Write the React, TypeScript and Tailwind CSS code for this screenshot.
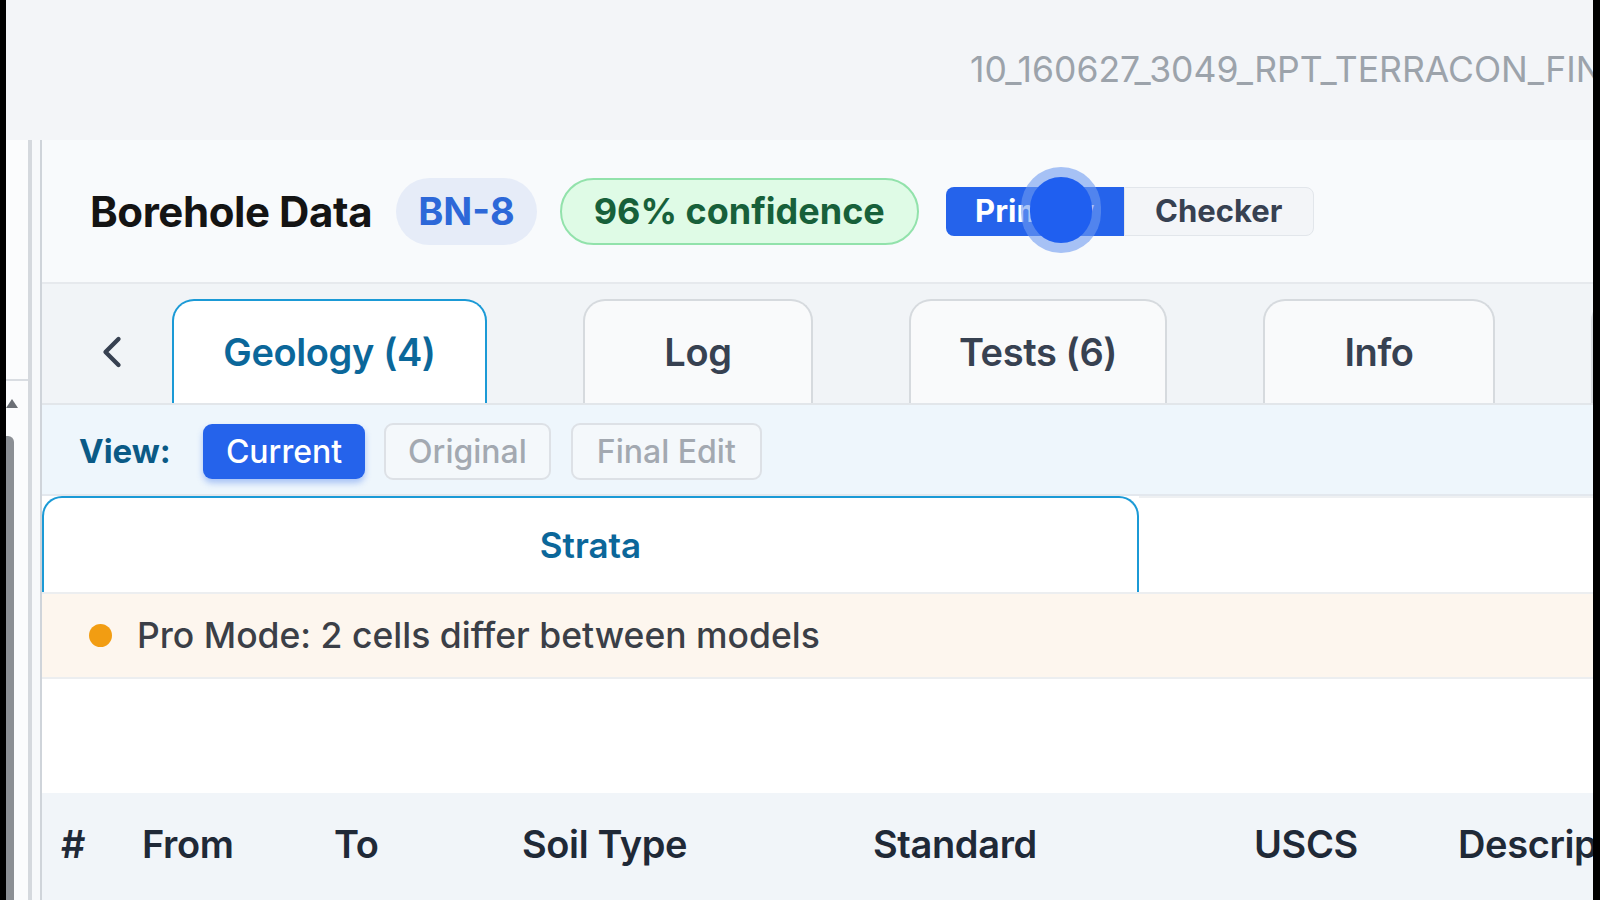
import { ChevronLeft } from "lucide-react"

const tabs = [
  { label: "Geology (4)", width: "w-[315px]", active: true },
  { label: "Log", width: "w-[230px]", active: false },
  { label: "Tests (6)", width: "w-[258px]", active: false },
  { label: "Info", width: "w-[232px]", active: false },
]

const columns = ["#", "From", "To", "Soil Type", "Standard", "USCS", "Description"]

function Header() {
  return (
    <div className="flex h-[144px] shrink-0 items-center border-b-2 border-[#e6e9ed] bg-[#f8fafc] pl-[48px]">
      <h1 className="text-[42px] font-bold tracking-[-0.01em] text-[#141414]">Borehole Data</h1>
      <span className="ml-[24px] flex h-[67px] items-center rounded-full bg-[#e6ecf8] px-[22px] text-[38px] font-bold text-[#2d68d8]">
        BN-8
      </span>
      <span className="ml-[23px] flex h-[67px] w-[359px] items-center justify-center rounded-full border-2 border-[#92e2ab] bg-[#dffbe6] text-[36px] font-bold text-[#17603a]">
        96% confidence
      </span>
      <div className="relative ml-[27px] flex h-[49px]">
        <span className="flex w-[178px] items-center justify-center rounded-l-[8px] bg-[#2563eb] text-[31px] font-bold text-white">
          Primary
        </span>
        <span className="flex w-[190px] items-center justify-center rounded-r-[8px] border border-[#e2e6eb] bg-[#f3f5f8] text-[31px] font-bold text-[#374151]">
          Checker
        </span>
        {/* touch indicator from the screen recording */}
        <div className="absolute left-[75px] top-[-20px] h-[86px] w-[80px] rounded-full bg-[#6f9bf0]/60" />
        <div className="absolute left-[84px] top-[-10px] h-[66px] w-[62px] rounded-full bg-[#1f5ff0]" />
      </div>
    </div>
  )
}

function TabBar() {
  return (
    <div className="flex h-[121px] shrink-0 items-end overflow-hidden border-b-2 border-[#e2e6ea] bg-[#f1f4f7]">
      <div className="flex h-full w-[130px] shrink-0 items-center justify-center pl-[10px] pt-[16px]">
        <ChevronLeft size={52} strokeWidth={2} className="text-[#374151]" />
      </div>
      <div className="flex shrink-0 gap-[96px]">
        {tabs.map((tab) => (
          <div
            key={tab.label}
            className={
              tab.active
                ? `${tab.width} flex h-[104px] shrink-0 items-center justify-center rounded-t-[22px] border-2 border-b-0 border-[#1b9ad6] bg-white text-[38px] font-semibold tracking-[-0.01em] text-[#0b679a]`
                : `${tab.width} flex h-[104px] shrink-0 items-center justify-center rounded-t-[22px] border-2 border-b-0 border-[#d6dade] bg-[#f9fafb] text-[38px] font-semibold tracking-[-0.01em] text-[#374151]`
            }
          >
            {tab.label}
          </div>
        ))}
        <div className="h-[104px] w-[100px] shrink-0 rounded-t-[22px] border-2 border-b-0 border-[#d6dade] bg-[#f9fafb]" />
      </div>
    </div>
  )
}

function ViewRow() {
  return (
    <div className="flex h-[91px] shrink-0 items-center border-b-2 border-[#e3e8ee] bg-[#eef6fc] pl-[37px] pt-[4px]">
      <span className="text-[33px] font-bold text-[#0a5a86]">View:</span>
      <button className="ml-[32px] flex h-[55px] items-center rounded-[9px] bg-[#2563eb] px-[23px] text-[32px] font-medium text-white shadow-[0_4px_6px_rgba(37,99,235,0.35)]">
        Current
      </button>
      <button className="ml-[19px] flex h-[57px] items-center rounded-[9px] border-2 border-[#dde1e6] bg-[#f4f8fb] px-[22px] text-[32px] font-medium text-[#a3a9b1]">
        Original
      </button>
      <button className="ml-[20px] flex h-[57px] items-center rounded-[9px] border-2 border-[#dde1e6] bg-[#f4f8fb] px-[24px] text-[32px] font-medium text-[#a3a9b1]">
        Final Edit
      </button>
    </div>
  )
}

export default function App() {
  return (
    <div className="flex h-[900px] w-[1600px] overflow-hidden bg-black font-['Inter',sans-serif]">
      <div className="w-[6px] shrink-0 bg-black" />

      <div className="flex min-w-0 flex-1 flex-col">
        <div className="flex h-[140px] shrink-0 items-center overflow-hidden whitespace-nowrap bg-[#f3f5f8] pl-[964px]">
          <span className="text-[35.5px] text-[#9ca3ab]">10_160627_3049_RPT_TERRACON_FINAL_REPORT.pdf</span>
        </div>

        <div className="flex min-h-0 flex-1">
          {/* sidebar edge */}
          <div className="flex w-[22px] shrink-0 flex-col bg-[#fbfcfd]">
            <div className="h-[241px] shrink-0 border-b-2 border-[#d9dde2]" />
            <div className="mt-[18px] h-0 w-0 border-x-[6px] border-b-[9px] border-x-transparent border-b-[#6b6f75]" />
            <div className="mt-[28px] w-[8px] flex-1 rounded-tr-[6px] bg-[#8b8f94]" />
          </div>
          <div className="w-[4px] shrink-0 bg-[#d5d9de]" />
          <div className="w-[8px] shrink-0 bg-[#f7f9fb]" />
          <div className="w-[2px] shrink-0 bg-[#cfd4da]" />

          <main className="flex min-w-0 flex-1 flex-col bg-white">
            <Header />
            <TabBar />
            <ViewRow />

            <div className="flex h-[96px] shrink-0">
              <div className="flex w-[1097px] items-center justify-center rounded-t-[20px] border-2 border-b-0 border-[#1b9ad6] bg-white text-[35px] font-semibold text-[#0b679a]">
                Strata
              </div>
              <div className="flex-1 border-t-2 border-[#eef0f2] bg-white" />
            </div>

            <div className="flex h-[87px] shrink-0 items-center border-y-2 border-[#eceef0] bg-[#fdf6ee] pl-[47px]">
              <span className="h-[23px] w-[23px] rounded-full bg-[#f29d12]" />
              <span className="ml-[25px] text-[35.5px] font-medium text-[#3b3f47]">
                Pro Mode: 2 cells differ between models
              </span>
            </div>

            <div className="h-[114px] shrink-0 bg-white" />

            <div className="grid flex-1 grid-cols-[81px_192px_188px_351px_381px_204px_1fr] items-center overflow-hidden whitespace-nowrap bg-[#f1f5f9] pb-[4px] pl-[19px] text-[38px] font-semibold tracking-[-0.01em] text-[#1f2937]">
              {columns.map((c) => (
                <span key={c}>{c}</span>
              ))}
            </div>
          </main>
        </div>
      </div>

      <div className="w-[7px] shrink-0 bg-black" />
    </div>
  )
}
